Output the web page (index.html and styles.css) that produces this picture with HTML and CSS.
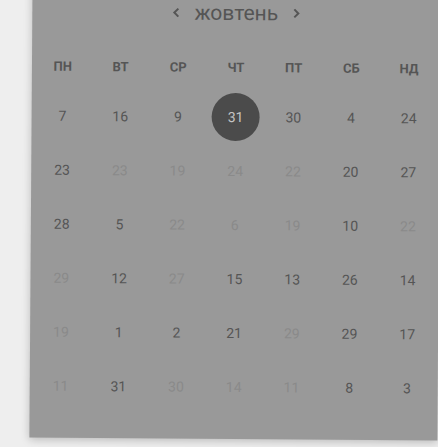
FILE: index.html
```html
<!DOCTYPE html>
<html lang="uk">
<head>
<meta charset="utf-8">
<link rel="stylesheet" href="styles.css">
</head>
<body>
<div class="card">
  <div class="header">
    <svg class="chev" width="8" height="10" viewBox="0 0 8 10"><polyline points="6,1 2,5 6,9" fill="none" stroke="#555" stroke-width="2"/></svg>
    <span class="month">жовтень</span>
    <svg class="chev" width="8" height="10" viewBox="0 0 8 10"><polyline points="2,1 6,5 2,9" fill="none" stroke="#555" stroke-width="2"/></svg>
  </div>
  <div class="grid weekdays">
    <span>ПН</span><span>ВТ</span><span>СР</span><span>ЧТ</span><span>ПТ</span><span>СБ</span><span>НД</span>
  </div>
  <div class="grid days">
    <span>7</span><span>16</span><span>9</span><span><b class="sel">31</b></span><span>30</span><span>4</span><span>24</span>
    <span>23</span><span class="off">23</span><span class="off">19</span><span class="off">24</span><span class="off">22</span><span>20</span><span>27</span>
    <span>28</span><span>5</span><span class="off">22</span><span class="off">6</span><span class="off">19</span><span>10</span><span class="off">22</span>
    <span class="off">29</span><span>12</span><span class="off">27</span><span>15</span><span>13</span><span>26</span><span>14</span>
    <span class="off">19</span><span>1</span><span>2</span><span>21</span><span class="off">29</span><span>29</span><span>17</span>
    <span class="off">11</span><span>31</span><span class="off">30</span><span class="off">14</span><span class="off">11</span><span>8</span><span>3</span>
  </div>
</div>
</body>
</html>
```

FILE: styles.css
```css
html, body {
  margin: 0;
  padding: 0;
  background: #eeeeee;
  overflow: hidden;
  height: 447px;
}
.card {
  box-sizing: border-box;
  width: 408px;
  margin: -30px 0 0 31px;
  padding: 30px 2px 25px 2px;
  background: #999999;
  box-shadow: 0 2px 8px rgba(0, 0, 0, 0.22);
  transform: rotate(0.4deg);
  font-family: Roboto, "Liberation Sans", sans-serif;
  color: #555555;
}
.header {
  height: 26px;
  display: flex;
  align-items: center;
  justify-content: center;
  gap: 14px;
}
.month {
  font-size: 21px;
  line-height: 26px;
  color: #555555;
}
.chev {
  display: block;
}
.grid {
  display: grid;
  grid-template-columns: repeat(7, 1fr);
}
.weekdays {
  margin-top: 31px;
  height: 20px;
  align-items: center;
}
.weekdays span {
  text-align: center;
  font-weight: 700;
  font-size: 13px;
  color: #555555;
}
.days {
  margin-top: 13px;
  grid-auto-rows: 54px;
  align-items: center;
}
.days span {
  display: flex;
  justify-content: center;
  align-items: center;
  font-size: 14px;
  color: #555555;
}
.days span.off {
  color: #8a8a8a;
}
.sel {
  display: flex;
  align-items: center;
  justify-content: center;
  width: 48px;
  height: 48px;
  border-radius: 50%;
  background: #4b4b4b;
  color: #c4c4c4;
  font-weight: 400;
}
```
